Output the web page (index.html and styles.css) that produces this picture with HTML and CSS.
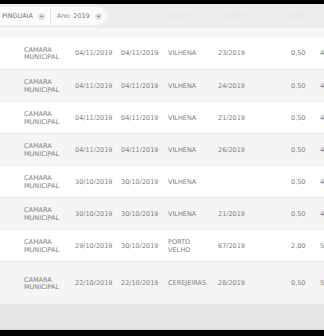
FILE: index.html
```html
<!DOCTYPE html>
<html>
<head>
<meta charset="utf-8">
<link rel="stylesheet" href="styles.css">
</head>
<body>
<div class="page">
  <div class="toolbar">
    <div class="filters">
      <div class="filter first">
        <span class="label">PINGUAIA</span>
        <span class="caret"><svg width="7" height="7" viewBox="0 0 7 7"><circle cx="3.5" cy="3.5" r="3.5" fill="#e2e2e2"/><path d="M1.8 2.7 L5.2 2.7 L3.5 4.6 Z" fill="#777"/></svg></span>
      </div>
      <div class="filter">
        <span class="label"><span class="key">Ano:</span> 2019</span>
        <span class="caret"><svg width="7" height="7" viewBox="0 0 7 7"><circle cx="3.5" cy="3.5" r="3.5" fill="#e2e2e2"/><path d="M1.8 2.7 L5.2 2.7 L3.5 4.6 Z" fill="#777"/></svg></span>
      </div>
    </div>
    <div class="ghosts"><span>CIDADE</span><span>NÚMERO</span><span>VALOR</span></div>
  </div>
  <div class="strip"></div>
  <div class="table">
    <div class="row r1"><div class="c name">CAMARA<br>MUNICIPAL</div><div class="c d1">04/11/2019</div><div class="c d2">04/11/2019</div><div class="c city">VILHENA</div><div class="c num">23/2019</div><div class="c val">0,50</div><div class="c last">4,50</div></div>
    <div class="row alt"><div class="c name">CAMARA<br>MUNICIPAL</div><div class="c d1">04/11/2019</div><div class="c d2">04/11/2019</div><div class="c city">VILHENA</div><div class="c num">24/2019</div><div class="c val">0,50</div><div class="c last">4,50</div></div>
    <div class="row"><div class="c name">CAMARA<br>MUNICIPAL</div><div class="c d1">04/11/2019</div><div class="c d2">04/11/2019</div><div class="c city">VILHENA</div><div class="c num">21/2019</div><div class="c val">0,50</div><div class="c last">4,50</div></div>
    <div class="row alt"><div class="c name">CAMARA<br>MUNICIPAL</div><div class="c d1">04/11/2019</div><div class="c d2">04/11/2019</div><div class="c city">VILHENA</div><div class="c num">26/2019</div><div class="c val">0,50</div><div class="c last">4,50</div></div>
    <div class="row"><div class="c name">CAMARA<br>MUNICIPAL</div><div class="c d1">30/10/2019</div><div class="c d2">30/10/2019</div><div class="c city">VILHENA</div><div class="c num"></div><div class="c val">0,50</div><div class="c last">4,50</div></div>
    <div class="row alt"><div class="c name">CAMARA<br>MUNICIPAL</div><div class="c d1">30/10/2019</div><div class="c d2">30/10/2019</div><div class="c city">VILHENA</div><div class="c num">21/2019</div><div class="c val">0,50</div><div class="c last">4,50</div></div>
    <div class="row"><div class="c name">CAMARA<br>MUNICIPAL</div><div class="c d1">29/10/2019</div><div class="c d2">30/10/2019</div><div class="c city">PORTO<br>VELHO</div><div class="c num">67/2019</div><div class="c val">2,00</div><div class="c last">5,00</div></div>
    <div class="row alt tall"><div class="c name">CAMARA<br>MUNICIPAL</div><div class="c d1">22/10/2019</div><div class="c d2">22/10/2019</div><div class="c city">CEREJEIRAS</div><div class="c num">28/2019</div><div class="c val">0,50</div><div class="c last">5,00</div></div>
  </div>
  <div class="footer"></div>
</div>
</body>
</html>
```
FILE: styles.css
```css
* { box-sizing: border-box; }
html, body { margin: 0; padding: 0; }
body {
  background: #000;
  width: 324px;
  height: 336px;
  overflow: hidden;
  font-family: "DejaVu Sans", "Open Sans", sans-serif;
  color: #7e7e7e;
}
.page {
  padding-top: 4px;
  width: 324px;
}
.toolbar {
  height: 24px;
  background: #eeeded;
  display: flex;
  align-items: center;
  justify-content: space-between;
}
.filters {
  display: flex;
  align-items: center;
  height: 18px;
  background: #fbfbfb;
  border-radius: 0 9px 9px 0;
}
.filter {
  display: flex;
  align-items: center;
  gap: 3px;
  height: 100%;
  padding: 0 5px 0 6px;
  font-size: 6.4px;
  color: #707070;
}
.filter.first {
  margin-left: -4px;
  padding-right: 5px;
  border-right: 1px solid #e4e4e4;
}
.key { color: #6f8a95; }
.caret { display: flex; margin-left: 2px; }
.ghosts {
  display: flex;
  gap: 30px;
  padding-right: 18px;
  font-size: 7px;
  color: #e8e6e6;
}
.strip {
  height: 9px;
  background: #f7f7f7;
}
.table { background: #fff; }
.row {
  display: flex;
  align-items: center;
  height: 32px;
  padding-left: 24px;
  padding-top: 2px;
  border-bottom: 1px solid #ebebeb;
  background: #fff;
  font-size: 6.5px;
  line-height: 7.5px;
  white-space: nowrap;
}
.row.r1 { height: 33px; }
.row.alt { background: #f5f5f5; }
.row.tall { height: 42px; border-bottom: none; }
.c { flex: none; }
.name { width: 51px; }
.d1 { width: 46px; }
.d2 { width: 47px; }
.city { width: 50px; }
.num { width: 73px; }
.val { width: 29px; }
.last { width: 20px; }
.footer {
  height: 26px;
  background: #e5e5e5;
  border-bottom: 1px solid #d2d2d2;
}
```
